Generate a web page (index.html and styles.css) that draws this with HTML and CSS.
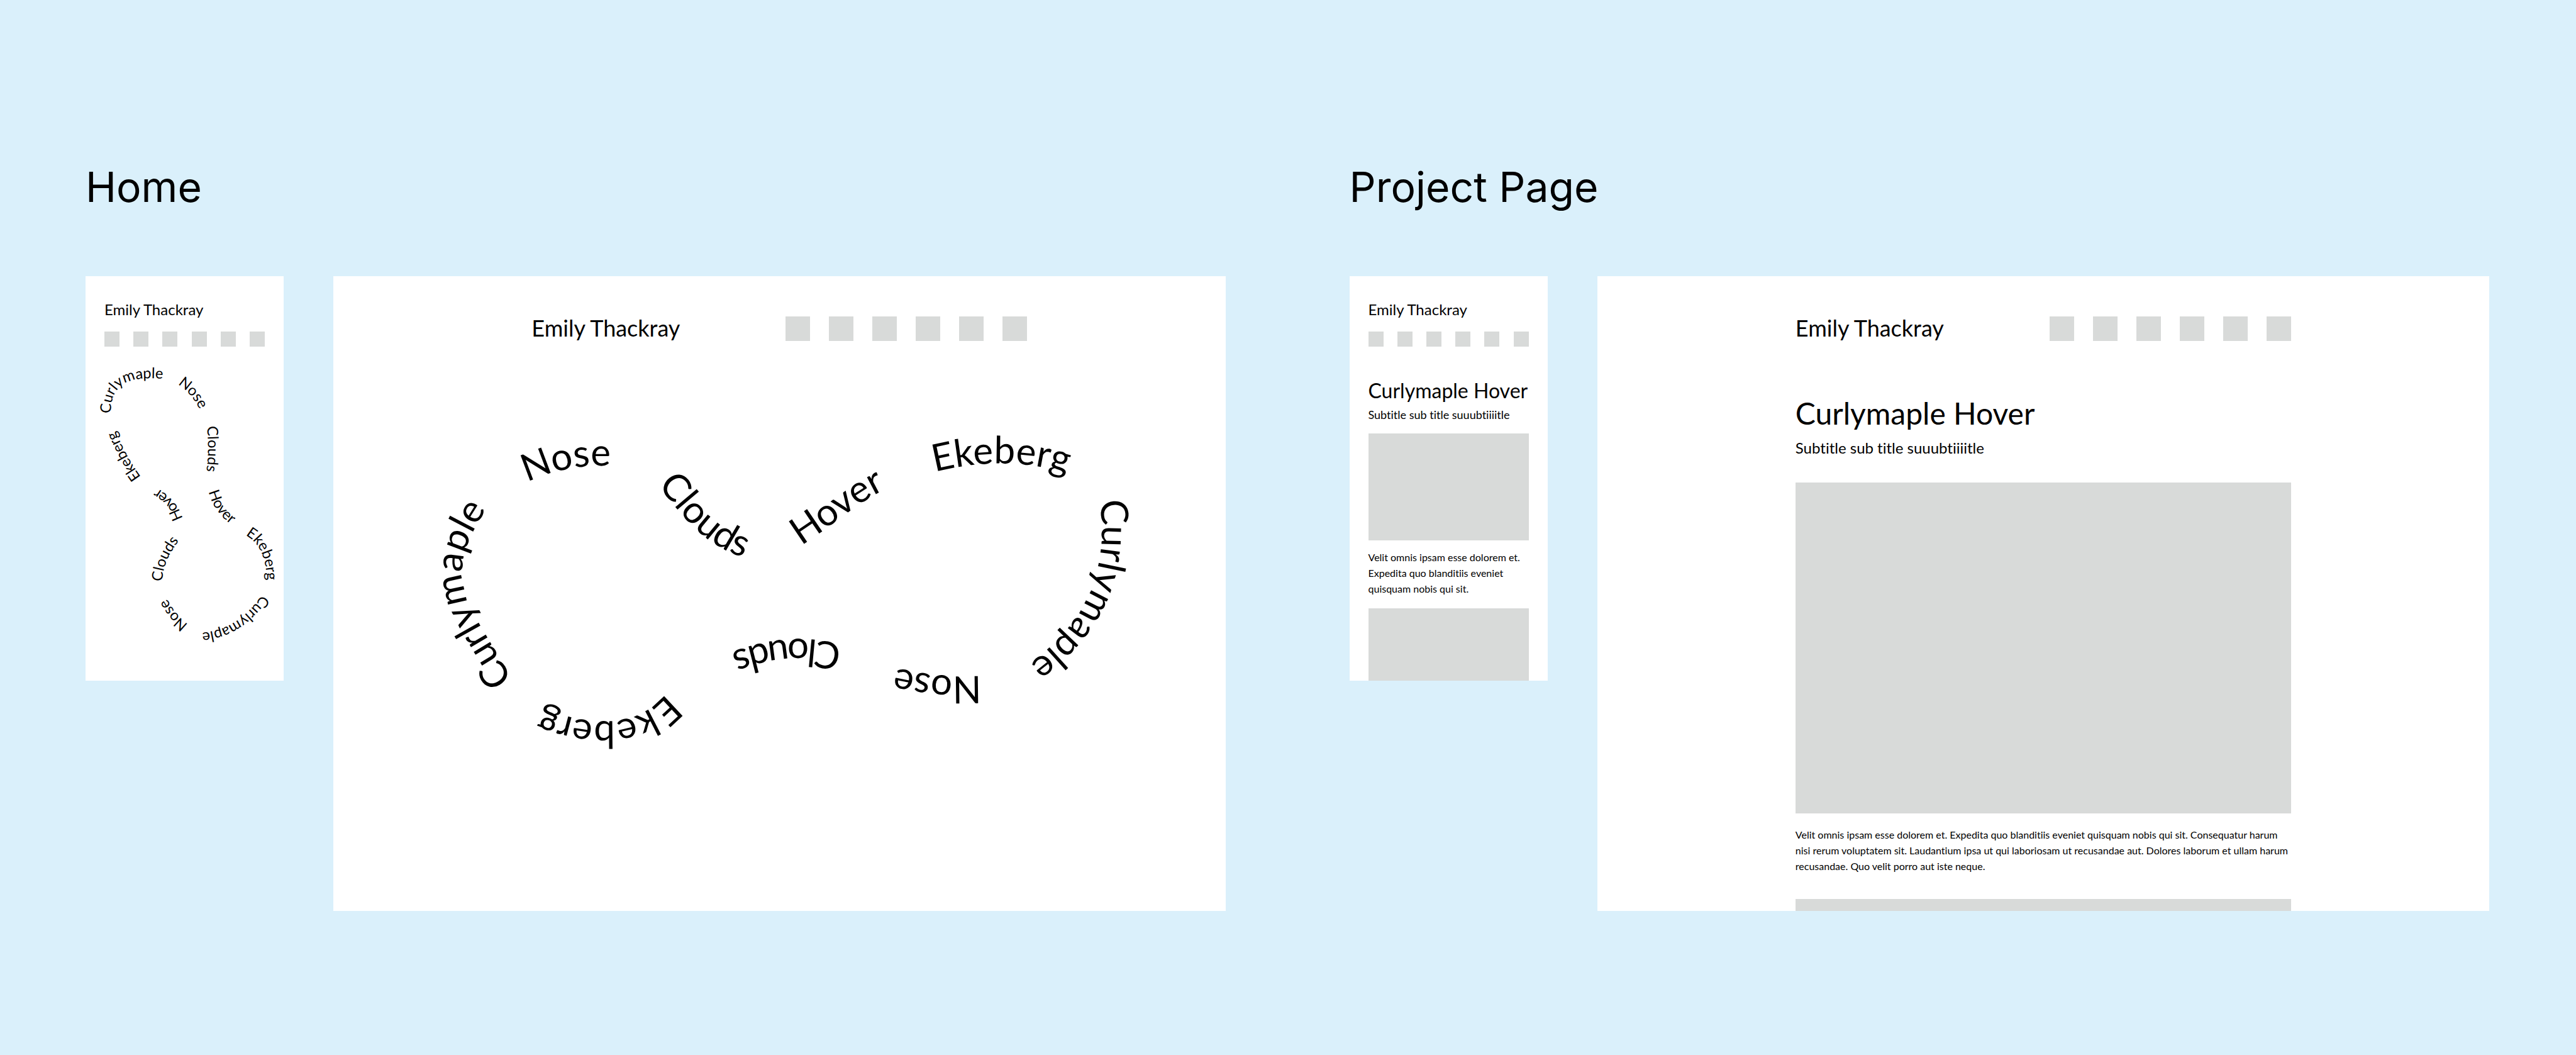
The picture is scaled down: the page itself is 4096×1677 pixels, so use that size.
FILE: index.html
```html
<!DOCTYPE html>
<html lang="en">
<head>
<meta charset="utf-8">
<title>Emily Thackray – wireframes</title>
<link rel="stylesheet" href="styles.css">
</head>
<body>
<main class="board">
  <section class="flow">
    <h1 class="flow-title">Home</h1>
    <div class="frames">
      <article class="frame phone">
        <header class="site-header">
          <p class="site-name">Emily Thackray</p>
          <ul class="swatches"><li></li><li></li><li></li><li></li><li></li><li></li></ul>
        </header>
        <svg class="loop" viewBox="0 113 320 540">
          <defs>
            <path id="p1" d="M41 221 C40 174 68 160 125 165"/>
            <path id="p2" d="M149 174 C164 184 176 197 184 214"/>
            <path id="p3" d="M196 241 C198 265 199 290 195 315"/>
            <path id="p4" d="M198 343 C203 368 216 387 238 402"/>
            <path id="p5" d="M256 416 C280 428 292 452 293 493"/>
            <path id="p6" d="M288 510 C262 545 235 572 183 575"/>
            <path id="p7" d="M168 563 C152 551 140 537 130 517"/>
            <path id="p8" d="M124 494 C124 468 135 446 152 425"/>
            <path id="p9" d="M158 395 C152 371 138 354 112 339"/>
            <path id="p10" d="M93 328 C76 306 60 278 46 243"/>
          </defs>
          <g class="loop-words">
            <text><textPath href="#p1" startOffset="50%">Curlymaple</textPath></text>
            <text><textPath href="#p2" startOffset="50%">Nose</textPath></text>
            <text><textPath href="#p3" startOffset="50%">Clouds</textPath></text>
            <text><textPath href="#p4" startOffset="50%">Hover</textPath></text>
            <text><textPath href="#p5" startOffset="50%">Ekeberg</textPath></text>
            <text><textPath href="#p6" startOffset="50%">Curlymaple</textPath></text>
            <text><textPath href="#p7" startOffset="50%">Nose</textPath></text>
            <text><textPath href="#p8" startOffset="50%">Clouds</textPath></text>
            <text><textPath href="#p9" startOffset="50%">Hover</textPath></text>
            <text><textPath href="#p10" startOffset="50%">Ekeberg</textPath></text>
          </g>
        </svg>
      </article>
      <article class="frame desktop">
        <header class="site-header">
          <p class="site-name">Emily Thackray</p>
          <ul class="swatches"><li></li><li></li><li></li><li></li><li></li><li></li></ul>
        </header>
        <svg class="loop" viewBox="0 105 1440 919">
          <defs>
            <path id="d1" d="M291 655 C258 596 228 555 214 515 C200 470 210 430 250 373"/>
            <path id="d2" d="M309 335 C350 315 400 303 452 307"/>
            <path id="d3" d="M512 324 C550 366 590 440 680 459"/>
            <path id="d4" d="M755 435 C800 408 845 366 892 344"/>
            <path id="d5" d="M965 318 C1040 298 1120 296 1190 321"/>
            <path id="d6" d="M1236 356 C1252 460 1228 552 1118 630"/>
            <path id="d7" d="M1049 645 C1000 649 955 643 905 632"/>
            <path id="d8" d="M830 598 C770 580 710 580 633 611"/>
            <path id="d9" d="M539 671 C500 722 430 735 335 696"/>
          </defs>
          <g class="loop-words">
            <text><textPath href="#d1" startOffset="50%">Curlymaple</textPath></text>
            <text><textPath href="#d2" startOffset="50%">Nose</textPath></text>
            <text><textPath href="#d3" startOffset="50%">Clouds</textPath></text>
            <text><textPath href="#d4" startOffset="50%">Hover</textPath></text>
            <text><textPath href="#d5" startOffset="50%">Ekeberg</textPath></text>
            <text><textPath href="#d6" startOffset="50%">Curlymaple</textPath></text>
            <text><textPath href="#d7" startOffset="50%">Nose</textPath></text>
            <text><textPath href="#d8" startOffset="50%">Clouds</textPath></text>
            <text><textPath href="#d9" startOffset="50%">Ekeberg</textPath></text>
          </g>
        </svg>
      </article>
    </div>
  </section>

  <section class="flow">
    <h1 class="flow-title">Project Page</h1>
    <div class="frames">
      <article class="frame phone">
        <header class="site-header">
          <p class="site-name">Emily Thackray</p>
          <ul class="swatches"><li></li><li></li><li></li><li></li><li></li><li></li></ul>
        </header>
        <div class="project">
          <h2 class="project-title">Curlymaple Hover</h2>
          <p class="project-subtitle">Subtitle sub title suuubtiiiitle</p>
          <div class="picture"></div>
          <p class="copy">Velit omnis ipsam esse dolorem et.<br>Expedita quo blanditiis eveniet<br>quisquam nobis qui sit.</p>
          <div class="picture"></div>
        </div>
      </article>
      <article class="frame desktop">
        <header class="site-header">
          <p class="site-name">Emily Thackray</p>
          <ul class="swatches"><li></li><li></li><li></li><li></li><li></li><li></li></ul>
        </header>
        <div class="project">
          <h2 class="project-title">Curlymaple Hover</h2>
          <p class="project-subtitle">Subtitle sub title suuubtiiiitle</p>
          <div class="picture"></div>
          <p class="copy">Velit omnis ipsam esse dolorem et. Expedita quo blanditiis eveniet quisquam nobis qui sit. Consequatur harum<br>nisi rerum voluptatem sit. Laudantium ipsa ut qui laboriosam ut recusandae aut. Dolores laborum et ullam harum<br>recusandae. Quo velit porro aut iste neque.</p>
          <div class="picture"></div>
        </div>
      </article>
    </div>
  </section>
</main>
</body>
</html>
```
FILE: styles.css
```css
* { box-sizing: border-box; }

body {
  margin: 0;
  background: #daf0fb;
  color: #000;
  font-family: Lato, "Noto Sans", sans-serif;
  font-variant-ligatures: none;
}

h1, h2, p, ul { margin: 0; padding: 0; font-weight: 400; }
ul { list-style: none; }

.board {
  display: grid;
  grid-template-columns: 1fr 1fr;
  gap: 197px;
  min-height: 100vh;
  padding: 257px 138px 120px 136px;
}

.flow { min-width: 0; }

.flow-title {
  margin-bottom: 102px;
  font-family: Inter, sans-serif;
  font-size: 66px;
  line-height: 80px;
}

.frames {
  display: grid;
  grid-template-columns: 320fr 1440fr;
  gap: 79px;
  align-items: start;
}

.frame {
  min-width: 0;
  overflow: hidden;
  background: #fff;
}

.phone { aspect-ratio: 320 / 653; }
.desktop { aspect-ratio: 1440 / 1024; }

.swatches { display: flex; }
.swatches li { background: #d8dad9; }

.loop {
  display: block;
  width: 100%;
  height: auto;
}

.loop-words { text-anchor: middle; }

.picture { background: #d8dad9; }

.copy {
  font-size: 16px;
  line-height: 25px;
  white-space: nowrap;
}

/* phone frames */
.phone .site-header { padding: 39px 30px 0; }
.phone .site-name { font-size: 24px; line-height: 28px; }
.phone .swatches { margin-top: 21px; justify-content: space-between; }
.phone .swatches li { width: 24px; height: 24px; }
.phone .loop-words { font-size: 24px; }
.phone .project { padding: 51px 30px 0; }
.phone .project-title { font-size: 32px; line-height: 38px; white-space: nowrap; }
.phone .project-subtitle { margin-top: 8px; font-size: 18px; line-height: 22px; }
.phone .picture { margin-top: 19px; aspect-ratio: 260 / 173; }
.phone .copy { margin-top: 14px; }

/* desktop frames: content takes the middle five ninths */
.desktop .site-header {
  display: flex;
  justify-content: space-between;
  align-items: flex-start;
  padding: 64px calc(100% * 2 / 9) 0;
}
.desktop .site-name { font-size: 36px; line-height: 36px; }
.desktop .swatches { gap: 30px; }
.desktop .swatches li { width: 39px; height: 39px; }
.desktop .loop-words { font-size: 61px; }
.desktop .project { padding: 86px calc(100% * 2 / 9) 0; }
.desktop .project-title { font-size: 48px; line-height: 58px; }
.desktop .project-subtitle { margin-top: 12px; font-size: 24px; line-height: 28px; }
.desktop .picture { margin-top: 41px; aspect-ratio: 800 / 534; }
.desktop .copy { margin-top: 21px; }
.desktop .copy + .picture { margin-top: 40px; }
```
